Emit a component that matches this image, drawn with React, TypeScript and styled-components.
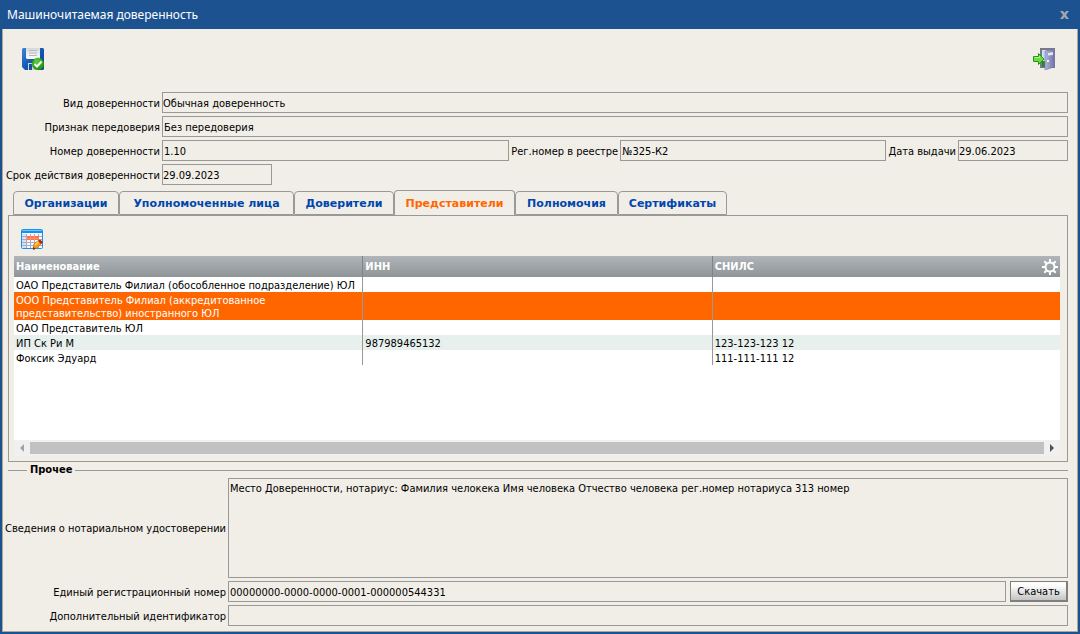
import React from "react";
import styled, { createGlobalStyle, css } from "styled-components";

const line = "#999999";
const paper = "#f1eee7";
const blue = "#1d5291";
const uiFont = `Tahoma, "DejaVu Sans Condensed", "DejaVu Sans", sans-serif`;
const tabFont = `Verdana, "DejaVu Sans", sans-serif`;

const GlobalStyle = createGlobalStyle`
  *, *::before, *::after { box-sizing: border-box; }
  body { margin: 0; background: ${blue}; font: 11px/13px ${uiFont}; color: #000; }
  button, input, textarea { font: inherit; color: inherit; }
`;

const Window = styled.div`
  display: flex;
  flex-direction: column;
  min-height: 100vh;
  padding: 0 2px 2px;
  background: ${blue};
`;

const TitleBar = styled.header`
  display: flex;
  align-items: center;
  justify-content: space-between;
  height: 29px;
  padding: 0 9px 0 5px;
  color: #fff;
`;

const Title = styled.h1`
  margin: 0;
  font: 12px/16px "Noto Sans", sans-serif;
`;

const IconButton = styled.button`
  display: block;
  padding: 0;
  border: 0;
  background: none;
  line-height: 0;
  cursor: pointer;
`;

const Body = styled.main`
  flex: 1;
  display: flex;
  flex-direction: column;
  padding: 0 9px 5px 5px;
  background: ${paper};
  border: 1px solid #aca899;
  border-top: 0;
`;

const Toolbar = styled.div`
  display: flex;
  justify-content: space-between;
  padding: 19px 13px 22px 14px;
`;

const Form = styled.div`
  display: flex;
  flex-direction: column;
  gap: 3px;
`;

const Label = styled.label`
  display: flex;
  flex: none;
  padding: 1px 1px 0 0;
  white-space: nowrap;
`;

const Row = styled.div<{ $labelWidth: number }>`
  display: flex;
  align-items: center;
  gap: 1px;
  & > ${Label} {
    margin-left: 1px;
  }
  & > ${Label}:first-child {
    flex: 0 0 ${(p) => p.$labelWidth}px;
    min-width: 0;
    justify-content: flex-end;
    margin-left: 0;
  }
`;

const boxed = css`
  min-width: 0;
  border: 1px solid ${line};
  border-radius: 0;
  background: transparent;
  outline: none;
`;

const Field = styled.input<{ $grow?: number; $date?: boolean; $flush?: boolean }>`
  ${boxed}
  flex: ${(p) => (p.$date ? "0 0 110px" : `${p.$grow ?? 1} 1 0`)};
  height: 21px;
  padding: 2px ${(p) => (p.$flush ? 0 : 1)}px 0;
`;

const Notes = styled.textarea`
  ${boxed}
  flex: 1;
  height: 100px;
  padding: 3px 1px;
  resize: none;
`;

const Tabs = styled.div`
  display: flex;
  align-items: flex-end;
  height: 26px;
  margin-top: 4px;
  padding-left: 5px;
`;

const Tab = styled.button<{ $active?: boolean; $width: number }>`
  flex: 0 0 ${(p) => p.$width}px;
  height: ${(p) => (p.$active ? 26 : 24)}px;
  margin-bottom: ${(p) => (p.$active ? -1 : 0)}px;
  padding: 2px 0 0;
  border: 1px solid ${line};
  border-bottom-color: ${(p) => (p.$active ? "#fff" : line)};
  border-radius: 4px 4px 0 0;
  background: ${paper};
  color: ${(p) => (p.$active ? "#ff6600" : "#0046ad")};
  font: bold 11px/14px ${tabFont};
  white-space: nowrap;
  cursor: pointer;
`;

const Panel = styled.section`
  flex: 1;
  display: flex;
  flex-direction: column;
  padding: 13px 7px 5px 5px;
  border: 1px solid ${line};
`;

const PanelTools = styled.div`
  padding: 0 7px 5px;
`;

const Grid = styled.div`
  flex: 1;
  display: flex;
  flex-direction: column;
  background: #fff;
`;

const Table = styled.table`
  width: 100%;
  table-layout: fixed;
  border-collapse: separate;
  border-spacing: 0;
  margin-bottom: auto;
`;

const HeadRow = styled.tr`
  height: 21px;
  background: linear-gradient(#afb5b8, #8f9497);
  color: #fff;
`;

const Th = styled.th`
  width: 33.4%;
  padding: 0 2px;
  text-align: left;
  border-right: 1px solid #808486;
  &:last-child { width: auto; border-right: 0; }
`;

const HeadCell = styled.div`
  display: flex;
  align-items: center;
  justify-content: space-between;
`;

const Tr = styled.tr<{ $tone?: "selected" | "even" }>`
  background: ${(p) => (p.$tone === "selected" ? "#ff6600" : p.$tone === "even" ? "#e8f0ed" : "#fff")};
  color: ${(p) => (p.$tone === "selected" ? "#fff" : "#000")};
`;

const Td = styled.td`
  padding: 2px 2px 0;
  line-height: 13px;
  height: 15px;
  vertical-align: top;
  border-right: 1px solid ${line};
  &:last-child { border-right: 0; }
`;

const ScrollBar = styled.div`
  display: flex;
  align-items: center;
  height: 16px;
  background: #f0f0f1;
`;

const ScrollArrow = styled.button`
  flex: 0 0 16px;
  height: 16px;
  display: grid;
  place-items: center;
  padding: 0;
  border: 0;
  background: none;
`;

const ScrollThumb = styled.div`
  flex: 1;
  height: 12px;
  background: #c1c1c1;
`;

const Other = styled.fieldset`
  min-width: 0;
  margin: 0;
  padding: 0;
  border: 0;
`;

const Legend = styled.legend`
  display: flex;
  align-items: center;
  gap: 3px;
  width: 100%;
  padding: 0;
  font-weight: bold;
  line-height: 16px;
  &::before, &::after { content: ""; height: 1px; background: ${line}; }
  &::before { width: 19px; }
  &::after { flex: 1; }
`;

const Download = styled.button`
  flex: 0 0 58px;
  height: 21px;
  margin-left: 3px;
  padding: 1px 0 0;
  border: 1px solid #7f7f7f;
  border-width: 1px 2px 2px 1px;
  background: linear-gradient(#fdfdfd 20%, #c4c4c4);
  white-space: nowrap;
`;

const CloseIcon = () => (
  <svg width="9" height="8" viewBox="0 0 9 8">
    <path d="M0 0h3l1.5 2L6 0h3L6 4l3 4H6L4.5 6 3 8H0l3-4z" fill="#a3a5a8" />
  </svg>
);

const SaveIcon = () => (
  <svg width="22" height="22" viewBox="0 0 22 22">
    <defs>
      <linearGradient id="disk" x1="0" y1="0" x2="1" y2="1">
        <stop offset="0" stopColor="#3c86d8" />
        <stop offset="0.5" stopColor="#1658b4" />
        <stop offset="1" stopColor="#0c3f92" />
      </linearGradient>
      <radialGradient id="ok" cx="0.4" cy="0.3" r="0.8">
        <stop offset="0" stopColor="#5fd03c" />
        <stop offset="1" stopColor="#118708" />
      </radialGradient>
      <linearGradient id="paper" x1="0" y1="0" x2="0" y2="1">
        <stop offset="0" stopColor="#d5d8dc" />
        <stop offset="1" stopColor="#fdfdfd" />
      </linearGradient>
    </defs>
    <path d="M1 0h20l1 1v20l-1 1H3l-3-3V1z" fill="url(#disk)" />
    <path d="M4 0h14v11H5l-1-1z" fill="url(#paper)" />
    <path d="M7 2.5h8M7 5h8M7 7.5h8" stroke="#b5b8bc" />
    <path d="M6 15h10v7H6z" fill="#d2d7de" />
    <path d="M7 16h3v6H7z" fill="#164f9f" />
    <circle cx="16" cy="16" r="6" fill="url(#ok)" stroke="#2b9a1d" strokeWidth="0.5" />
    <path d="M12.5 16l2.5 2.5 4.5-5" fill="none" stroke="#fff" strokeWidth="2" />
  </svg>
);

const ExitIcon = () => (
  <svg width="22" height="22" viewBox="0 0 22 22">
    <defs>
      <linearGradient id="door" x1="0" y1="0" x2="1" y2="0">
        <stop offset="0" stopColor="#b3b4df" />
        <stop offset="1" stopColor="#7375ad" />
      </linearGradient>
    </defs>
    <path d="M7 0h15v20H7z" fill="#777a86" />
    <path d="M9 2h5v11H9z" fill="#c4e4f5" />
    <path d="M9 13h5v6H9z" fill="#258d20" />
    <path d="M12 3l9-2v18l-9 3z" fill="url(#door)" stroke="#7779a9" strokeWidth="0.6" />
    <path d="M15 5l5-1v3l-5 .5z" fill="#e3e5fb" />
    <path d="M14 12h2v2h-2z" fill="#fbf7df" />
    <path d="M.5 8.5h5V5.5l5.5 5.5-5.5 5.5v-3h-5z" fill="#6bdc3e" stroke="#24951a" />
    <path d="M1.5 9.5h5V8" fill="none" stroke="#b1f48c" />
  </svg>
);

const EditTableIcon = () => (
  <svg width="22" height="22" viewBox="0 0 22 22">
    <rect x="0.5" y="0.5" width="21" height="19" rx="1" fill="#f7f8fb" stroke="#1890f0" />
    <path d="M1 1h20v3H1z" fill="#1890f0" />
    <path d="M1.5 1.5h19" stroke="#70c8fa" />
    <path d="M1 5h4v14H1z" fill="#dce0ee" />
    <path d="M1 7.5h20M1 10.5h20M1 13.5h20M1 16.5h20M5.5 5v14M9.5 5v14M13.5 5v14M17.5 5v14" stroke="#a9acc8" />
    <path d="M6 7h12v4H6z" fill="#ff7442" />
    <path d="M6 9.5h12M9.5 7v4M13.5 7v4" stroke="#ff9068" />
    <path d="M12 20l1-5 5-4 3 3-5 5z" fill="#ff9d12" stroke="#c96406" strokeWidth="0.7" />
    <path d="M14 16l4-4" stroke="#ffdb5d" strokeWidth="1.3" />
    <path d="M17 12l2-1.5 3 2.5-2 2z" fill="#a9261b" />
    <path d="M12 21l.6-3 2 1.7z" fill="#463021" />
  </svg>
);

const GearIcon = () => (
  <svg width="16" height="16" viewBox="0 0 16 16" fill="none" stroke="#fff">
    <circle cx="8" cy="8" r="4.5" strokeWidth="2" />
    <path d="M8 0v3M8 13v3M0 8h3M13 8h3M2.3 2.3l2 2M11.7 11.7l2 2M2.3 13.7l2-2M11.7 4.3l2-2" strokeWidth="2" />
  </svg>
);

const Arrow = ({ left }: { left?: boolean }) => (
  <svg width="4" height="8" viewBox="0 0 4 8">
    <path d={left ? "M4 0v8L0 4z" : "M0 0v8l4-4z"} fill={left ? "#a3a3a3" : "#505050"} />
  </svg>
);

const tabs = [
  { name: "Организации", width: 106 },
  { name: "Уполномоченные лица", width: 175 },
  { name: "Доверители", width: 100 },
  { name: "Представители", width: 121, active: true },
  { name: "Полномочия", width: 103 },
  { name: "Сертификаты", width: 109 },
];

const rows: { name: string; inn?: string; snils?: string; tone?: "selected" | "even" }[] = [
  { name: "ОАО Представитель Филиал (обособленное подразделение) ЮЛ" },
  { name: "ООО Представитель Филиал (аккредитованное представительство) иностранного ЮЛ", tone: "selected" },
  { name: "ОАО Представитель ЮЛ" },
  { name: "ИП Ск Ри М", inn: "987989465132", snils: "123-123-123 12", tone: "even" },
  { name: "Фоксик Эдуард", snils: "111-111-111 12" },
];

export default function App() {
  return (
    <Window>
      <GlobalStyle />
      <TitleBar>
        <Title>Машиночитаемая доверенность</Title>
        <IconButton aria-label="Закрыть"><CloseIcon /></IconButton>
      </TitleBar>
      <Body>
        <Toolbar>
          <IconButton aria-label="Сохранить"><SaveIcon /></IconButton>
          <IconButton aria-label="Выход"><ExitIcon /></IconButton>
        </Toolbar>
        <Form>
          <Row $labelWidth={153}>
            <Label htmlFor="kind">Вид доверенности</Label>
            <Field id="kind" readOnly $flush defaultValue="Обычная доверенность" />
          </Row>
          <Row $labelWidth={153}>
            <Label htmlFor="transfer">Признак передоверия</Label>
            <Field id="transfer" readOnly defaultValue="Без передоверия" />
          </Row>
          <Row $labelWidth={153}>
            <Label htmlFor="number">Номер доверенности</Label>
            <Field id="number" readOnly $grow={347} defaultValue="1.10" />
            <Label htmlFor="registry">Рег.номер в реестре</Label>
            <Field id="registry" readOnly $grow={265} defaultValue="№325-К2" />
            <Label htmlFor="issued">Дата выдачи</Label>
            <Field id="issued" readOnly $date $flush defaultValue="29.06.2023" />
          </Row>
          <Row $labelWidth={153}>
            <Label htmlFor="expires">Срок действия доверенности</Label>
            <Field id="expires" readOnly $date $flush defaultValue="29.09.2023" />
          </Row>
        </Form>
        <Tabs role="tablist">
          {tabs.map((t) => (
            <Tab key={t.name} role="tab" aria-selected={!!t.active} $active={t.active} $width={t.width}>
              {t.name}
            </Tab>
          ))}
        </Tabs>
        <Panel role="tabpanel">
          <PanelTools>
            <IconButton aria-label="Редактировать таблицу"><EditTableIcon /></IconButton>
          </PanelTools>
          <Grid>
            <Table>
              <thead>
                <HeadRow>
                  <Th>Наименование</Th>
                  <Th>ИНН</Th>
                  <Th>
                    <HeadCell>
                      СНИЛС
                      <IconButton aria-label="Настройки"><GearIcon /></IconButton>
                    </HeadCell>
                  </Th>
                </HeadRow>
              </thead>
              <tbody>
                {rows.map((r) => (
                  <Tr key={r.name} $tone={r.tone}>
                    <Td>{r.name}</Td>
                    <Td>{r.inn}</Td>
                    <Td>{r.snils}</Td>
                  </Tr>
                ))}
              </tbody>
            </Table>
            <ScrollBar>
              <ScrollArrow aria-label="Прокрутить влево"><Arrow left /></ScrollArrow>
              <ScrollThumb />
              <ScrollArrow aria-label="Прокрутить вправо"><Arrow /></ScrollArrow>
            </ScrollBar>
          </Grid>
        </Panel>
        <Other>
          <Legend>Прочее</Legend>
          <Form>
            <Row $labelWidth={219}>
              <Label htmlFor="notary">Сведения о нотариальном удостоверении</Label>
              <Notes id="notary" readOnly defaultValue="Место Доверенности, нотариус: Фамилия челокека Имя человека Отчество человека рег.номер нотариуса 313 номер" />
            </Row>
            <Row $labelWidth={219}>
              <Label htmlFor="uid">Единый регистрационный номер</Label>
              <Field id="uid" readOnly defaultValue="00000000-0000-0000-0001-000000544331" />
              <Download>Скачать</Download>
            </Row>
            <Row $labelWidth={219}>
              <Label htmlFor="extra">Дополнительный идентификатор</Label>
              <Field id="extra" readOnly />
            </Row>
          </Form>
        </Other>
      </Body>
    </Window>
  );
}
